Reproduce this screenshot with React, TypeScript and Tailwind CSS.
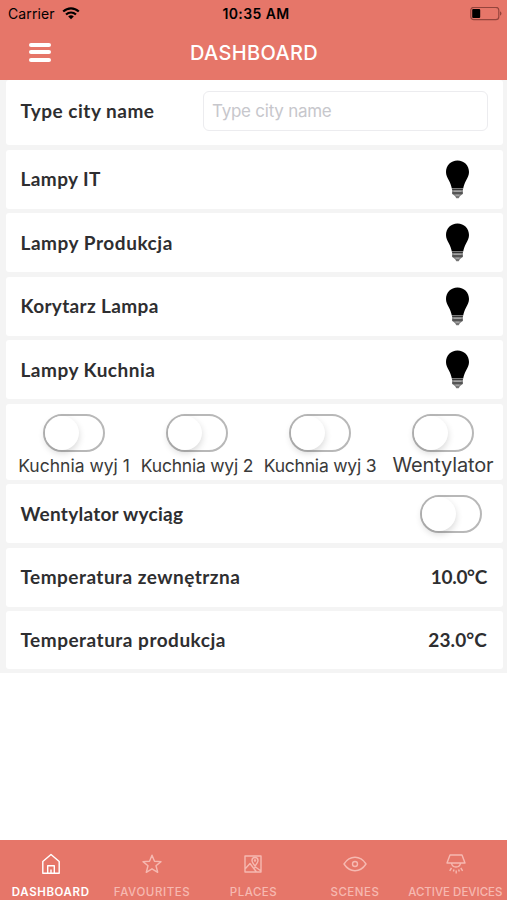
import React from "react";

const labelFont = "font-['Lato','Noto_Sans',sans-serif] font-bold text-[#2e2e30]";

function Card({ children, className }: { children: React.ReactNode; className: string }) {
  return <div className={`rounded-[3px] bg-white pl-[14.5px] pr-[15px] flex items-center justify-between ${className}`}>{children}</div>;
}

function Label({ text, className }: { text: string; className: string }) {
  return <span className={`whitespace-nowrap text-[19px] leading-6 ${labelFont} ${className}`}>{text}</span>;
}

function Toggle() {
  return (
    <span className="flex h-[38px] w-[62px] shrink-0 rounded-full border-2 border-[#b8b8b8] bg-white">
      <span className="h-[34px] w-[34px] rounded-full bg-white shadow-[0_3px_7px_rgba(0,0,0,0.16)]" />
    </span>
  );
}

function Bulb() {
  return (
    <svg className="mr-[18px] h-[39px] w-[25px]" viewBox="0 0 25 39">
      <path d="M12.5.5C5.800.5 1 5.500 1 12c0 3 1.300 5.500 2.800 8.200C5.500 23.400 6.400 26 6.800 28.500h11.400c.4-2.500 1.300-5.100 3-8.300C22.700 17.500 24 15 24 12 24 5.500 19.200.5 12.500.5Z" fill="#000" />
      <path d="M7.200 28.500h10.600v5.500l-2.800 2-1.300 2.300h-2.400L10 36l-2.800-2Z" fill="#777" />
      <path d="M7.200 29.500h10.600M7.200 33h10.600" stroke="#333" strokeWidth="1" />
      <path d="M8.500 31.200h8M10.500 35.200h4" stroke="#c8c8c8" strokeWidth=".8" />
    </svg>
  );
}

const lamps = [
  { text: "Lampy IT", fit: "tracking-[0.4px]" },
  { text: "Lampy Produkcja", fit: "tracking-[0.54px]" },
  { text: "Korytarz Lampa", fit: "tracking-[0.34px]" },
  { text: "Lampy Kuchnia", fit: "tracking-[0.5px]" },
];

const switches = [
  { text: "Kuchnia wyj 1", style: "pt-[1px] text-[17.5px]" },
  { text: "Kuchnia wyj 2", style: "pt-[1px] text-[17.5px] tracking-[-0.22px]" },
  { text: "Kuchnia wyj 3", style: "pt-[1px] text-[17.5px] tracking-[-0.22px]" },
  { text: "Wentylator", style: "text-[20px] tracking-[-0.15px] text-[#2a2a2a]" },
];

const tabs = [
  {
    text: "DASHBOARD",
    style: "text-white",
    fit: "font-semibold tracking-[0.6px]",
    icon: <path d="M3.800 9.500 12 2.500l8.200 7v11.800H3.800ZM8.700 21v-7.200h6.600V21M12 21v-3.500" />,
  },
  {
    text: "FAVOURITES",
    style: "text-[#f6b9b1]",
    fit: "font-medium tracking-[0.6px]",
    icon: <path d="m12 3.200 2.500 6 6.500.4-5 4.200 1.700 6.500-5.700-3.500-5.700 3.500L8 13.800 3 9.600l6.500-.4Z" />,
  },
  {
    text: "PLACES",
    style: "text-[#f6b9b1]",
    fit: "font-medium tracking-[0.5px]",
    icon: (
      <>
        <path d="M4 4h16v16H4ZM4 17l5-5.500 6.500 8.500M13 16.500l1.500-1.500 5.500 4" />
        <path d="M14 14c-2-2.500-3-4-3-5.500a3 3 0 0 1 6 0c0 1.500-1 3-3 5.500Z" />
        <circle cx="14" cy="8.500" r=".5" />
      </>
    ),
  },
  {
    text: "SCENES",
    style: "text-[#f6b9b1]",
    fit: "font-medium tracking-[0.5px]",
    icon: (
      <>
        <path d="M1 12c3-4.600 6.500-6.700 11-6.700S20 7.400 23 12c-3 4.600-6.500 6.700-11 6.700S4 16.600 1 12Z" />
        <circle cx="12" cy="12" r="2.500" />
      </>
    ),
  },
  {
    text: "ACTIVE DEVICES",
    style: "text-[#f6b9b1]",
    fit: "mr-[2px] font-medium tracking-[0px]",
    icon: <path d="M6 3h12l3 8H3ZM7.500 11c.3 2.500 2 4 4.500 4s4.200-1.500 4.500-4M7.500 16l-1.800 2.800M10 17.500l-.6 2M12.200 18.500v3M14.600 17.500l.7 2M16.800 16l1.800 2.800" />,
  },
];

export default function App() {
  return (
    <div className="flex h-[900px] w-[507px] flex-col overflow-hidden bg-white font-['Inter',sans-serif]">
      <header className="h-[79.500px] shrink-0 bg-[#e67669]">
        <div className="grid h-[27px] grid-cols-3 items-center pl-[8px] pr-[5px] text-black">
          <div className="flex items-center gap-[7px]">
            <span className="text-[14px] tracking-[0.1px]">Carrier</span>
            <svg className="h-[14px] w-[18px]" viewBox="0 0 18 14">
              <g fill="none" stroke="#000" strokeWidth="2.200">
                <path d="M1.200 4.500C5.700.2 12.300.2 16.800 4.500" />
                <path d="M4 7.500c3-2.700 7-2.700 10 0" />
              </g>
              <path d="M6.200 9.400c1.700-1.400 3.900-1.400 5.600 0L9 12.300Z" />
            </svg>
          </div>
          <span className="pl-[2px] text-center text-[14px] font-semibold tracking-[0.4px]">10:35 AM</span>
          <svg className="h-[14px] w-[32px] justify-self-end" viewBox="0 0 32 14">
            <rect x=".8" y=".3" width="28" height="12.400" rx="3" fill="none" stroke="#94443c" strokeWidth="1.200" />
            <rect x="2.200" y="2" width="8" height="9" rx="1" fill="#000" />
            <path d="M30 4.300c2 .8 2 3.600 0 4.400Z" fill="#94443c" />
          </svg>
        </div>
        <div className="grid h-[50px] grid-cols-[60px_1fr_60px] items-center">
          <div className="flex flex-col gap-[3.500px] pl-[29px]">
            <span className="h-[4px] w-[22px] rounded-full bg-white" />
            <span className="h-[4px] w-[22px] rounded-full bg-white" />
            <span className="h-[4px] w-[22px] rounded-full bg-white" />
          </div>
          <h1 className="pl-[1px] pt-[1px] text-center text-[20px] font-medium tracking-[0.35px] text-white">DASHBOARD</h1>
        </div>
      </header>

      <main className="flex h-[593.500px] shrink-0 flex-col gap-[4.500px] bg-[#f4f4f4] pl-[6px] pr-[4.500px]">
        <Card className="h-[65.500px] shrink-0 pb-[3px]">
          <Label text="Type city name" className="tracking-[0.5px]" />
          <input
            placeholder="Type city name"
            className="h-[40px] w-[285px] rounded-[6px] border border-[#ececef] bg-white pl-[8.500px] text-[17px] tracking-[-0.25px] text-[#333] placeholder:text-[#c7c7cc]"
          />
        </Card>
        {lamps.map((l) => (
          <Card key={l.text} className="h-[59px] shrink-0">
            <Label text={l.text} className={l.fit} />
            <Bulb />
          </Card>
        ))}
        <div className="grid h-[76px] shrink-0 grid-cols-[repeat(4,123px)] rounded-[3px] bg-white pl-[6.500px] pt-[10px]">
          {switches.map((s) => (
            <div key={s.text} className="flex flex-col items-center">
              <Toggle />
              <span className={`whitespace-nowrap leading-[26px] text-[#3a3a3a] ${s.style}`}>{s.text}</span>
            </div>
          ))}
        </div>
        <Card className="h-[59px] shrink-0">
          <Label text="Wentylator wyciąg" className="tracking-[0.26px]" />
          <div className="mr-[5.500px] flex"><Toggle /></div>
        </Card>
        <Card className="h-[59px] shrink-0 pb-[1px]">
          <Label text="Temperatura zewnętrzna" className="tracking-[0.47px]" />
          <Label text="10.0°C" className="mr-[0.5px] tracking-[-0.3px]" />
        </Card>
        <Card className="h-[58px] shrink-0">
          <Label text="Temperatura produkcja" className="tracking-[0.5px]" />
          <Label text="23.0°C" className="mr-[0.5px] tracking-[0.1px]" />
        </Card>
      </main>

      <nav className="mt-auto grid h-[60px] shrink-0 grid-cols-5 bg-[#e67669]">
        {tabs.map((t) => (
          <div key={t.text} className={`flex flex-col items-center pt-[12px] ${t.style}`}>
            <svg className="h-[24px] w-[24px]" viewBox="0 0 24 24" fill="none" stroke="currentColor" strokeWidth="1.400" strokeLinejoin="round">
              {t.icon}
            </svg>
            <span className={`mt-[8px] whitespace-nowrap text-[11.500px] leading-[17px] ${t.fit}`}>{t.text}</span>
          </div>
        ))}
      </nav>
    </div>
  );
}
